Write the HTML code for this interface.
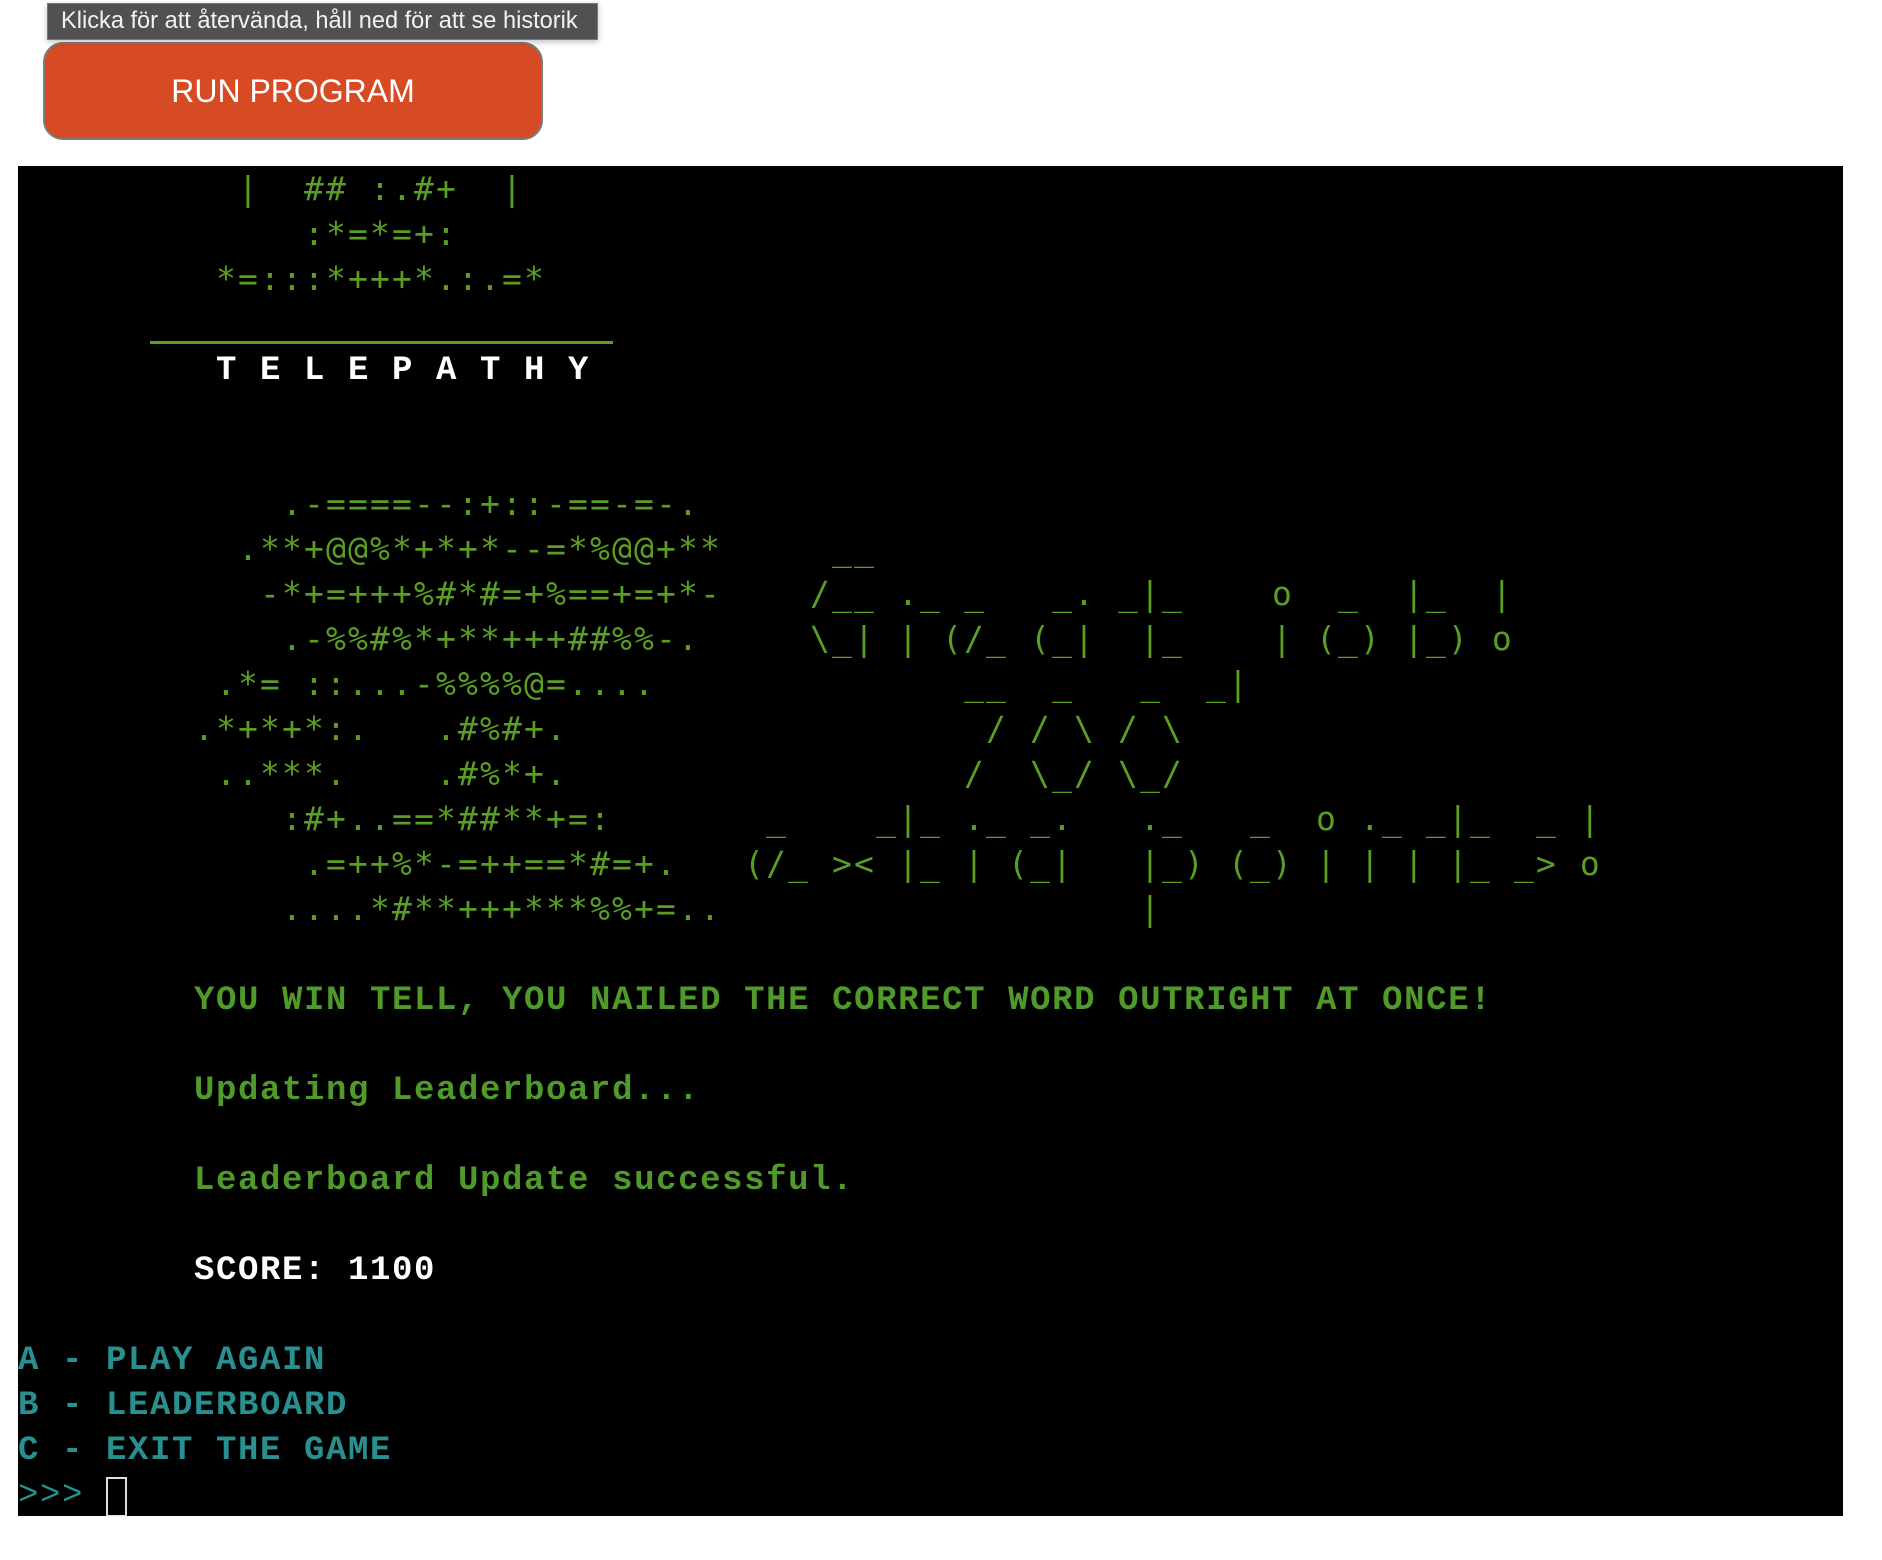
<!DOCTYPE html>
<html><head><meta charset="utf-8"><style>
html,body{margin:0;padding:0;background:#fff;width:1882px;height:1560px;overflow:hidden;position:relative}
.tip{position:absolute;left:47px;top:3px;width:551px;height:37px;background:#525052;border:1px solid #7a7a7a;box-sizing:border-box;color:#f2f2f2;font-family:"Liberation Sans",sans-serif;font-size:23.6px;line-height:35px;padding-left:13px;white-space:nowrap;z-index:2;box-shadow:0 2px 6px rgba(0,0,0,.25)}
.btn{position:absolute;left:43px;top:42px;width:500px;height:98px;box-sizing:border-box;background:#d74b24;border:2px solid #7b7b7b;border-radius:20px;color:#fff;font-family:"Liberation Sans",sans-serif;font-size:32px;text-align:center;line-height:94px}
.term{position:absolute;left:18px;top:166px;width:1825px;height:1350px;background:#000;overflow:hidden}
.r{position:absolute;left:0;height:45px;width:1825px}
.r span{position:absolute;top:0;white-space:pre;line-height:45px}
.a{font-family:"DejaVu Sans Mono",monospace;font-size:33px;letter-spacing:2.13px;color:#5a9e23}
.t{font-family:"Liberation Mono",monospace;font-size:34px;letter-spacing:1.6px;font-weight:bold;color:#4f9a2b;margin-top:3px}
.w{color:#fff}
.c{color:#2a8f8f;font-weight:bold}
.cur{position:absolute;left:88px;top:1311px;width:21px;height:40px;border:2px solid #ddd;box-sizing:border-box}
.ul{position:absolute;left:132px;top:175px;width:463px;height:3px;background:#5a9e23}
</style></head><body>
<div class="tip">Klicka för att återvända, håll ned för att se historik</div>
<div class="btn">RUN PROGRAM</div>
<div class="term">
<div class="r" style="top:0"><span class="a" style="left:220px">|  ## :.#+  |</span></div>
<div class="r" style="top:45px"><span class="a" style="left:286px">:*=*=+:</span></div>
<div class="r" style="top:90px"><span class="a" style="left:198px">*=:::*+++*.:.=*</span></div>
<div class="ul"></div>
<div class="r" style="top:180px"><span class="t w" style="left:198px">T E L E P A T H Y</span></div>
<div class="r" style="top:315px"><span class="a" style="left:264px">.-====--:+::-==-=-.</span></div>
<div class="r" style="top:360px"><span class="a" style="left:220px">.**+@@%*+*+*--=*%@@+**</span><span class="a" style="left:814px">__</span></div>
<div class="r" style="top:405px"><span class="a" style="left:242px">-*+=+++%#*#=+%==+=+*-</span><span class="a" style="left:792px">/__ ._ _   _. _|_    o  _  |_  |</span></div>
<div class="r" style="top:450px"><span class="a" style="left:264px">.-%%#%*+**+++##%%-.</span><span class="a" style="left:792px">\_| | (/_ (_|  |_    | (_) |_) o</span></div>
<div class="r" style="top:495px"><span class="a" style="left:198px">.*= ::...-%%%%@=....</span><span class="a" style="left:946px">__  _   _  _|</span></div>
<div class="r" style="top:540px"><span class="a" style="left:176px">.*+*+*:.   .#%#+.</span><span class="a" style="left:968px">/ / \ / \</span></div>
<div class="r" style="top:585px"><span class="a" style="left:198px">..***.    .#%*+.</span><span class="a" style="left:946px">/  \_/ \_/</span></div>
<div class="r" style="top:630px"><span class="a" style="left:264px">:#+..==*##**+=:</span><span class="a" style="left:748px">_    _|_ ._ _.   ._   _  o ._ _|_  _ |</span></div>
<div class="r" style="top:675px"><span class="a" style="left:286px">.=++%*-=++==*#=+.</span><span class="a" style="left:726px">(/_ &gt;&lt; |_ | (_|   |_) (_) | | | |_ _&gt; o</span></div>
<div class="r" style="top:720px"><span class="a" style="left:264px">....*#**+++***%%+=..</span><span class="a" style="left:1122px">|</span></div>
<div class="r" style="top:810px"><span class="t" style="left:176px">YOU WIN TELL, YOU NAILED THE CORRECT WORD OUTRIGHT AT ONCE!</span></div>
<div class="r" style="top:900px"><span class="t" style="left:176px">Updating Leaderboard...</span></div>
<div class="r" style="top:990px"><span class="t" style="left:176px">Leaderboard Update successful.</span></div>
<div class="r" style="top:1080px"><span class="t w" style="left:176px">SCORE: 1100</span></div>
<div class="r" style="top:1170px"><span class="t c" style="left:0">A - PLAY AGAIN</span></div>
<div class="r" style="top:1215px"><span class="t c" style="left:0">B - LEADERBOARD</span></div>
<div class="r" style="top:1260px"><span class="t c" style="left:0">C - EXIT THE GAME</span></div>
<div class="r" style="top:1305px"><span class="t c" style="left:0;font-weight:normal">&gt;&gt;&gt;</span></div>
<div class="cur"></div>
</div>
</body></html>
